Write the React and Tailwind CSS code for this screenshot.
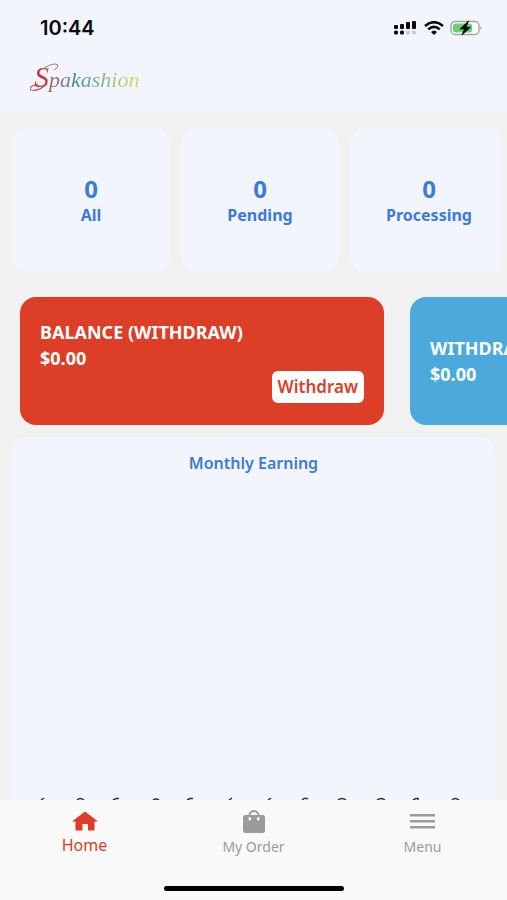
// src/App.jsx
import React from "react";

const stats = [
  { label: "All", count: 0 },
  { label: "Pending", count: 0 },
  { label: "Processing", count: 0 },
];

// first strokes of the slanted month labels on the chart's x axis
const tickMarks = [
  "M41 3 l3 -2",
  "M77 3 q3 -3 7 0",
  "M113 3 l3 -1.500 h3",
  "M153 3 q3 -2 6 0",
  "M187 3 l3 -1.500 h3",
  "M229 3 l3 -2",
  "M268 3 l3 -2",
  "M302 3 q3 -3 6 -1",
  "M338 3 q4 -3 8 0",
  "M377 3 q4 -3 8 0",
  "M413 3 l3 -1.500 h2 v1.500",
  "M452 3 q3 -3 7 0",
];

const SignalIcon = () => (
  <svg width="24" height="16" viewBox="0 0 24 16" aria-hidden="true">
    <g fill="#0b0b0b">
      <rect x="0" y="5" width="4" height="4" rx="1" />
      <rect x="6" y="4" width="4" height="5" rx="1" />
      <rect x="12" y="2" width="4" height="7" rx="1" />
      <rect x="18" y="1" width="4" height="8" rx="1" />
      <rect x="0" y="10.500" width="4" height="4" rx="1.500" />
      <rect x="6" y="10.500" width="4" height="4" rx="1.500" />
    </g>
    <g fill="#c9cad2">
      <rect x="12" y="10.500" width="4" height="4" rx="1.500" />
      <rect x="18" y="10.500" width="4" height="4" rx="1.500" />
    </g>
  </svg>
);

const WifiIcon = () => (
  <svg width="20" height="14" viewBox="0 0 20 14" fill="none" aria-hidden="true">
    <path d="M1 5 Q10 -2.5 19 5" stroke="#0b0b0b" strokeWidth="2.6" />
    <path d="M4.2 8.4 Q10 3.4 15.8 8.4" stroke="#0b0b0b" strokeWidth="2.5" />
    <path d="M7 11 Q10 8 13 11 L10 14 Z" fill="#0b0b0b" />
  </svg>
);

const BatteryIcon = () => (
  <svg width="33" height="16" viewBox="0 0 33 16" aria-hidden="true">
    <rect x="1" y="1.5" width="28" height="13" rx="4" fill="#fff" stroke="#a3a5ac" strokeWidth="1.4" />
    <rect x="3" y="3.5" width="19" height="9" rx="2.5" fill="#69d071" />
    <path d="M30.5 6 q2.5 2 0 4 z" fill="#a3a5ac" />
    <path
      d="M18.5 1 L10 9 h4.5 L12 15 L20.500 7.200 h-4.500 Z"
      fill="#0b0b0b"
      stroke="#0b0b0b"
      strokeWidth="0.800"
      strokeLinejoin="round"
    />
  </svg>
);

const HomeIcon = () => (
  <svg width="26" height="20" viewBox="0 0 26 20" fill="#dc3d27" aria-hidden="true">
    <path d="M13 0.500 L26 10.500 H22.500 V19.500 H16 V13 H10.500 V19.500 H3.500 V10.500 H0 Z" />
  </svg>
);

const BagIcon = () => (
  <svg width="22" height="23" viewBox="0 0 22 23" aria-hidden="true">
    <path d="M6.500 9 V5.500 a4.500 4.500 0 0 1 9 0 V9" fill="none" stroke="#9b9b9b" strokeWidth="2" />
    <rect x="0" y="5" width="22" height="18" rx="2.500" fill="#9b9b9b" />
    <rect x="5.500" y="7" width="2.500" height="3.500" rx="1.200" fill="#f9f9f9" />
    <rect x="14" y="7" width="2.500" height="3.500" rx="1.200" fill="#f9f9f9" />
  </svg>
);

const MenuIcon = () => (
  <svg width="25" height="15" viewBox="0 0 25 15" fill="#9b9b9b" aria-hidden="true">
    <rect y="0" width="25" height="2.500" />
    <rect y="6" width="25" height="2.500" />
    <rect y="12" width="25" height="2.500" />
  </svg>
);

const Logo = () => (
  <a
    href="#home"
    aria-label="Spakashion home"
    className="relative flex w-fit items-baseline bg-linear-to-r from-[#c8323c] from-10% via-[#3f8fb0] via-40% to-[#ece03c] bg-clip-text pr-1 pl-1 font-['Liberation_Serif',serif] text-[22px] leading-8 text-transparent italic"
  >
    <span className="text-3xl leading-8">S</span>
    <span>pakashion</span>
    <svg
      className="absolute top-0 left-0"
      width="40"
      height="32"
      viewBox="0 0 40 32"
      fill="none"
      stroke="#c8525c"
      aria-hidden="true"
    >
      <path d="M8 23 Q-3 26 1 29 Q8 31 17 23" strokeWidth="1.200" />
      <path d="M14 7 Q24 1 28 4 Q28 7 24 9" stroke="#8f7c9c" strokeWidth="1" />
    </svg>
  </a>
);

const StatCard = ({ label, count }) => (
  <button
    type="button"
    className="flex h-36 w-[158px] shrink-0 flex-col items-center justify-center rounded-2xl border-2 border-[#f4f5f9] bg-[#f3f5fe] pt-0.5 font-bold text-[#3b7bdc]"
  >
    <span className="text-2xl leading-7">{count}</span>
    <span className="text-base leading-6">{label}</span>
  </button>
);

const NavItem = ({ href, label, icon, active = false }) => (
  <a
    href={href}
    aria-current={active ? "page" : undefined}
    className={
      active
        ? "flex flex-1 flex-col items-center text-base leading-6 text-[#dc3d27]"
        : "flex flex-1 flex-col items-center text-sm leading-7 text-[#9b9b9b]"
    }
  >
    <span className="flex h-6 items-center">{icon}</span>
    <span>{label}</span>
  </a>
);

const App = () => {
  return (
    <div className="flex h-screen flex-col overflow-hidden bg-[#f1f1f1] font-['Noto_Sans',sans-serif]">
      <header className="bg-[#f3f5fe] pb-4">
        <div className="flex h-14 items-center justify-between pr-6 pl-10">
          <span className="font-['Inter',sans-serif] text-xl font-semibold text-[#0b0b0b]">
            10:44
          </span>
          <div className="flex items-center gap-1.5">
            <SignalIcon />
            <WifiIcon />
            <BatteryIcon />
          </div>
        </div>
        <div className="flex h-10 items-center pt-1 pl-[30px]">
          <Logo />
        </div>
      </header>

      <main className="flex min-h-0 flex-1 flex-col pt-4">
        <section className="mr-2 ml-3 flex gap-[11px] overflow-hidden">
          {stats.map((s) => (
            <StatCard key={s.label} {...s} />
          ))}
        </section>

        <section className="mt-[25px] flex gap-[26px] overflow-hidden pl-5 text-white">
          <article className="flex h-32 w-[364px] shrink-0 flex-col justify-between rounded-2xl bg-[#dc3e27] p-5 pt-[22px] pb-[22px]">
            <div className="text-lg leading-[26px] font-bold">
              <h2>BALANCE (WITHDRAW)</h2>
              <p>$0.00</p>
            </div>
            <button
              type="button"
              className="-mt-4 h-8 shrink-0 self-end rounded-md bg-white px-1.5 text-[17px] leading-6 font-semibold text-[#dc3e27]"
            >
              Withdraw
            </button>
          </article>
          <article className="flex h-32 w-[364px] shrink-0 flex-col justify-center rounded-2xl bg-[#4ba9dc] p-5 text-lg leading-[26px] font-bold">
            <h2>WITHDRAW</h2>
            <p>$0.00</p>
          </article>
        </section>

        <section className="mx-3 mt-3 flex min-h-0 flex-1 flex-col justify-between rounded-t-2xl bg-[#f3f5fe] pt-3.5">
          <h2 className="text-center text-base leading-6 font-semibold text-[#3b7bdc]">
            Monthly Earning
          </h2>
          <svg
            className="-ml-3 shrink-0"
            width="483"
            height="3"
            viewBox="0 0 483 3"
            fill="none"
            stroke="#333"
            strokeWidth="1.500"
            role="img"
            aria-label="Monthly earning chart"
          >
            {tickMarks.map((d) => (
              <path key={d} d={d} />
            ))}
          </svg>
        </section>
      </main>

      <nav className="flex h-[100px] shrink-0 flex-col justify-between bg-[#f9f9f9] pt-[9px] pb-[9px]">
        <div className="flex">
          <NavItem href="#home" label="Home" icon={<HomeIcon />} active />
          <NavItem href="#orders" label="My Order" icon={<BagIcon />} />
          <NavItem href="#menu" label="Menu" icon={<MenuIcon />} />
        </div>
        <div className="h-[5px] w-[180px] self-center rounded-full bg-black" />
      </nav>
    </div>
  );
};

export default App;
